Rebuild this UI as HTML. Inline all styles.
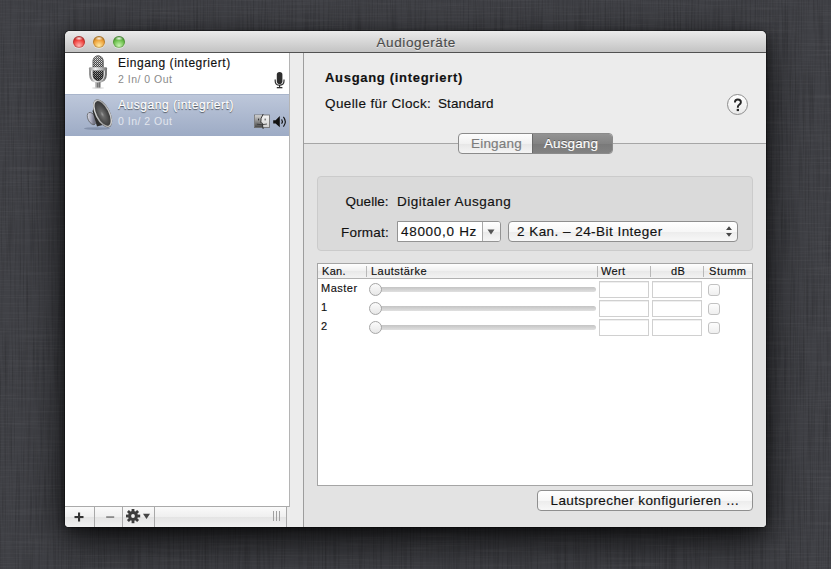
<!DOCTYPE html>
<html><head><meta charset="utf-8">
<style>
*{box-sizing:border-box;margin:0;padding:0}
html,body{width:831px;height:569px;overflow:hidden}
body{position:relative;font-family:"Liberation Sans",sans-serif;background:#404146}
.a{position:absolute;white-space:pre;line-height:1;-webkit-text-stroke:0.15px currentColor}
.b{position:absolute}
#shadow{position:absolute;left:65px;top:31px;width:701px;height:496px;border-radius:5px 5px 4px 4px;box-shadow:0 14px 40px rgba(0,0,0,.8),0 3px 12px rgba(0,0,0,.45),0 0 0 1px rgba(0,0,0,.3)}
#win{position:absolute;left:65px;top:31px;width:701px;height:496px;border-radius:5px 5px 4px 4px;background:#ececec;overflow:hidden}
#title{position:absolute;left:0;top:0;width:701px;height:22px;background:linear-gradient(#ebebeb,#d3d3d3 60%,#c3c3c3);border-bottom:1px solid #515151}
.tl{width:12px;height:12px;border-radius:50%;box-shadow:0 1px 0 rgba(255,255,255,.4),inset 0 0 0 1px rgba(0,0,0,.18)}
</style></head><body>
<svg style="position:absolute;left:0;top:0" width="831" height="569">
<filter id="lh" x="0" y="0" width="100%" height="100%"><feTurbulence type="fractalNoise" baseFrequency="0.6 0.015" numOctaves="2" seed="3"/><feColorMatrix values="0 0 0 0 0  0 0 0 0 0  0 0 0 0 0  0 0 0 -1.1 0.62"/></filter>
<filter id="lv" x="0" y="0" width="100%" height="100%"><feTurbulence type="fractalNoise" baseFrequency="0.015 0.6" numOctaves="2" seed="7"/><feColorMatrix values="0 0 0 0 1  0 0 0 0 1  0 0 0 0 1  0 0 0 -0.9 0.48"/></filter>
<rect width="831" height="569" filter="url(#lh)" opacity=".35"/>
<rect width="831" height="569" filter="url(#lv)" opacity=".12"/>
</svg>
<div id="shadow"></div>
<div id="win">
<div id="title"></div>
<div class="b tl" style="left:8px;top:5px;background:radial-gradient(ellipse 4px 2.2px at 50% 20%,rgba(255,255,255,.85),rgba(255,255,255,0)),radial-gradient(circle at 50% 80%,#ffb4b0 0,#f0423e 50%,#9a1a16 100%)"></div>
<div class="b tl" style="left:28px;top:5px;background:radial-gradient(ellipse 4px 2.2px at 50% 20%,rgba(255,255,255,.85),rgba(255,255,255,0)),radial-gradient(circle at 50% 80%,#ffe9a0 0,#eea23a 50%,#9a620c 100%)"></div>
<div class="b tl" style="left:48px;top:5px;background:radial-gradient(ellipse 4px 2.2px at 50% 20%,rgba(255,255,255,.85),rgba(255,255,255,0)),radial-gradient(circle at 50% 80%,#c8f4b0 0,#6cc04c 50%,#2f7422 100%)"></div>
<div class="a" style="left:311.50px;top:4.57px;font-size:13.5px;font-weight:400;letter-spacing:0.6px;color:#4b4b4b;text-shadow:0 1px 0 rgba(255,255,255,.55)">Audiogeräte</div>
<div class="b" style="left:0px;top:22px;width:225px;height:454px;background:#fff;border-right:1px solid #b4b4b4;border-bottom:1px solid #aaaaaa"></div>
<div class="b" style="left:0px;top:63px;width:224px;height:42px;background:linear-gradient(#bdc7da,#9dabc5);border-top:1px solid #a9b5cb"></div>
<div class="a" style="left:53.00px;top:26.04px;font-size:12px;font-weight:400;letter-spacing:0.53px;color:#111;">Eingang (integriert)</div>
<div class="a" style="left:53.00px;top:43.11px;font-size:10.5px;font-weight:400;letter-spacing:0.5px;color:#8a8a8a;-webkit-text-stroke:0">2 In/ 0 Out</div>
<div class="a" style="left:53.00px;top:67.64px;font-size:12px;font-weight:400;letter-spacing:0.53px;color:#fff;text-shadow:0 1px 1px rgba(0,0,0,.6)">Ausgang (integriert)</div>
<div class="a" style="left:53.00px;top:85.11px;font-size:10.5px;font-weight:400;letter-spacing:0.5px;color:#e2e6ee;-webkit-text-stroke:0">0 In/ 2 Out</div>
<div class="b" style="left:0px;top:476px;width:222px;height:20px;background:linear-gradient(#fafafa,#efefef 50%,#e4e4e4 51%,#f0f0f0);border-right:1px solid #a9a9a9"></div>
<div class="b" style="left:29px;top:476px;width:1px;height:20px;background:#a9a9a9"></div>
<div class="b" style="left:57px;top:476px;width:1px;height:20px;background:#a9a9a9"></div>
<div class="b" style="left:89px;top:476px;width:1px;height:20px;background:#a9a9a9"></div>
<div class="b" style="left:238px;top:22px;width:1px;height:474px;background:#9d9d9d"></div>
<div class="b" style="left:239px;top:112px;width:462px;height:384px;background:#e3e3e3;border-top:1px solid #a6a6a6"></div>
<div class="a" style="left:260.00px;top:40.30px;font-size:13px;font-weight:700;letter-spacing:0.69px;color:#111;">Ausgang (integriert)</div>
<div class="a" style="left:260.00px;top:65.67px;font-size:13.5px;font-weight:400;letter-spacing:0.38px;color:#111;">Quelle für Clock:</div>
<div class="a" style="left:373.00px;top:66.47px;font-size:13.5px;font-weight:400;letter-spacing:0.1px;color:#111;">Standard</div>
<div class="b" style="left:662px;top:63px;width:21px;height:21px;border-radius:50%;border:1px solid #8e8e8e;background:linear-gradient(#fff,#e9e9e9)"></div>
<svg class="b" style="left:667px;top:67px" width="12" height="14"><path d="M2.9 4.6 C2.9 2.4 4.3 1.5 5.8 1.5 C7.7 1.5 8.9 2.6 8.9 4.2 C8.9 5.9 7.3 6.5 6.5 7.3 C5.9 7.9 5.8 8.4 5.8 9.7" fill="none" stroke="#262626" stroke-width="1.9"/><rect x="4.7" y="10.9" width="2.3" height="2.2" fill="#262626"/></svg>
<div class="b" style="left:393px;top:102px;width:155px;height:21px;border-radius:4px;border:1px solid #8b8b8b;background:linear-gradient(#fdfdfd,#f1f1f1 50%,#e6e6e6 51%,#f4f4f4);overflow:hidden"></div>
<div class="b" style="left:467px;top:103px;width:80px;height:19px;background:linear-gradient(#939393,#838383 50%,#797979 51%,#828282);border-left:1px solid #6a6a6a;border-radius:0 3px 3px 0"></div>
<div class="a" style="left:406.00px;top:105.67px;font-size:13.5px;font-weight:400;letter-spacing:0.2px;color:#7c7c7c;">Eingang</div>
<div class="a" style="left:479.00px;top:105.67px;font-size:13.5px;font-weight:400;letter-spacing:0.1px;color:#fff;text-shadow:0 -1px 0 rgba(0,0,0,.35)">Ausgang</div>
<div class="b" style="left:252px;top:145px;width:436px;height:75px;border-radius:4px;border:1px solid #cbcbcb;background:#dadada"></div>
<div class="a" style="left:280.50px;top:163.57px;font-size:13.5px;font-weight:400;letter-spacing:0.04px;color:#111;">Quelle:</div>
<div class="a" style="left:332.00px;top:163.57px;font-size:13.5px;font-weight:400;letter-spacing:0.5px;color:#111;">Digitaler Ausgang</div>
<div class="a" style="left:276.00px;top:194.57px;font-size:13.5px;font-weight:400;letter-spacing:0.2px;color:#111;">Format:</div>
<div class="b" style="left:332px;top:190px;width:104px;height:21px;border:1px solid #939393;border-radius:0 3px 3px 0;background:#fff"></div>
<div class="b" style="left:417px;top:191px;width:18px;height:19px;border-left:1px solid #a8a8a8;background:linear-gradient(#fff,#f3f3f3 50%,#e9e9e9 51%,#f5f5f5);border-radius:0 2px 2px 0"></div>
<div class="a" style="left:336.00px;top:194.17px;font-size:13.5px;font-weight:400;letter-spacing:0.7px;color:#111;">48000,0 Hz</div>
<svg class="b" style="left:421px;top:197px" width="10" height="8"><path d="M1.5 1.5 L8.5 1.5 L5 6.5 Z" fill="#555"/></svg>
<div class="b" style="left:443px;top:190px;width:230px;height:21px;border:1px solid #8f8f8f;border-radius:4px;background:linear-gradient(#fff,#f7f7f7 50%,#ececec 51%,#f7f7f7)"></div>
<div class="a" style="left:452.00px;top:193.57px;font-size:13.5px;font-weight:400;letter-spacing:0.46px;color:#111;">2 Kan. – 24-Bit Integer</div>
<svg class="b" style="left:659px;top:194px" width="10" height="14"><path d="M5 1.2 L8 5 L2 5 Z M2 8 L8 8 L5 11.8 Z" fill="#484848"/></svg>
<div class="b" style="left:252px;top:232px;width:436px;height:223px;border:1px solid #a5a5a5;background:#fff"></div>
<div class="b" style="left:253px;top:233px;width:434px;height:15px;background:linear-gradient(#fefefe,#f0f0f0 50%,#e8e8e8 51%,#f3f3f3);border-bottom:1px solid #b1b1b1"></div>
<div class="b" style="left:301px;top:235px;width:1px;height:11px;background:#b8b8b8"></div>
<div class="b" style="left:532px;top:235px;width:1px;height:11px;background:#b8b8b8"></div>
<div class="b" style="left:585px;top:235px;width:1px;height:11px;background:#b8b8b8"></div>
<div class="b" style="left:638px;top:235px;width:1px;height:11px;background:#b8b8b8"></div>
<div class="a" style="left:257.00px;top:234.69px;font-size:11px;font-weight:400;letter-spacing:0.3px;color:#111;">Kan.</div>
<div class="a" style="left:306.00px;top:234.69px;font-size:11px;font-weight:400;letter-spacing:0.47px;color:#111;">Lautstärke</div>
<div class="a" style="left:536.00px;top:234.69px;font-size:11px;font-weight:400;letter-spacing:0.32px;color:#111;">Wert</div>
<div class="a" style="left:606.00px;top:234.69px;font-size:11px;font-weight:400;letter-spacing:0.3px;color:#111;">dB</div>
<div class="a" style="left:644.00px;top:234.69px;font-size:11px;font-weight:400;letter-spacing:0.55px;color:#111;">Stumm</div>
<div class="a" style="left:256.00px;top:251.79px;font-size:11px;font-weight:400;letter-spacing:0.5px;color:#111;">Master</div>
<div class="b" style="left:307px;top:256px;width:224px;height:5px;border-radius:3px;background:linear-gradient(#c4c4c4,#e0e0e0);"></div>
<div class="b" style="left:304px;top:252px;width:13px;height:13px;border-radius:50%;border:1px solid #a6a6a6;background:linear-gradient(#fbfbfb,#e7e7e7)"></div>
<div class="b" style="left:534px;top:250px;width:50px;height:17px;border:1px solid #d0d0d0;box-shadow:inset 0 1px 0 #efefef;background:#fff"></div>
<div class="b" style="left:587px;top:250px;width:50px;height:17px;border:1px solid #d0d0d0;box-shadow:inset 0 1px 0 #efefef;background:#fff"></div>
<div class="b" style="left:643px;top:253px;width:12px;height:12px;border:1px solid #c2c2c2;border-radius:3px;background:linear-gradient(#fdfdfd,#efefef)"></div>
<div class="a" style="left:256.00px;top:271.19px;font-size:11px;font-weight:400;letter-spacing:0.5px;color:#111;">1</div>
<div class="b" style="left:307px;top:275px;width:224px;height:5px;border-radius:3px;background:linear-gradient(#c4c4c4,#e0e0e0);"></div>
<div class="b" style="left:304px;top:271px;width:13px;height:13px;border-radius:50%;border:1px solid #a6a6a6;background:linear-gradient(#fbfbfb,#e7e7e7)"></div>
<div class="b" style="left:534px;top:269px;width:50px;height:17px;border:1px solid #d0d0d0;box-shadow:inset 0 1px 0 #efefef;background:#fff"></div>
<div class="b" style="left:587px;top:269px;width:50px;height:17px;border:1px solid #d0d0d0;box-shadow:inset 0 1px 0 #efefef;background:#fff"></div>
<div class="b" style="left:643px;top:272px;width:12px;height:12px;border:1px solid #c2c2c2;border-radius:3px;background:linear-gradient(#fdfdfd,#efefef)"></div>
<div class="a" style="left:256.00px;top:290.19px;font-size:11px;font-weight:400;letter-spacing:0.5px;color:#111;">2</div>
<div class="b" style="left:307px;top:294px;width:224px;height:5px;border-radius:3px;background:linear-gradient(#c4c4c4,#e0e0e0);"></div>
<div class="b" style="left:304px;top:290px;width:13px;height:13px;border-radius:50%;border:1px solid #a6a6a6;background:linear-gradient(#fbfbfb,#e7e7e7)"></div>
<div class="b" style="left:534px;top:288px;width:50px;height:17px;border:1px solid #d0d0d0;box-shadow:inset 0 1px 0 #efefef;background:#fff"></div>
<div class="b" style="left:587px;top:288px;width:50px;height:17px;border:1px solid #d0d0d0;box-shadow:inset 0 1px 0 #efefef;background:#fff"></div>
<div class="b" style="left:643px;top:291px;width:12px;height:12px;border:1px solid #c2c2c2;border-radius:3px;background:linear-gradient(#fdfdfd,#efefef)"></div>
<div class="b" style="left:472px;top:459px;width:216px;height:21px;border:1px solid #8f8f8f;border-radius:4px;background:linear-gradient(#fff,#f7f7f7 50%,#ececec 51%,#f7f7f7)"></div>
<div class="a" style="left:485.50px;top:462.87px;font-size:13.5px;font-weight:400;letter-spacing:0.4px;color:#111;">Lautsprecher konfigurieren …</div>
<svg class="b" style="left:20px;top:22px" width="26" height="38" viewBox="0 0 26 38"><defs><pattern id="chk" width="2" height="2" patternUnits="userSpaceOnUse"><rect width="2" height="2" fill="#2a2a2a"/><rect width="1" height="1" fill="#d8d8d8"/><rect x="1" y="1" width="1" height="1" fill="#9a9a9a"/></pattern><linearGradient id="slv" x1="0" x2="1"><stop offset="0" stop-color="#8a8a8a"/><stop offset=".35" stop-color="#f2f2f2"/><stop offset=".7" stop-color="#b5b5b5"/><stop offset="1" stop-color="#6d6d6d"/></linearGradient><linearGradient id="capd" x1="0" y1="0" x2="0" y2="1"><stop offset="0" stop-color="#fff" stop-opacity=".25"/><stop offset=".45" stop-color="#fff" stop-opacity=".1"/><stop offset=".55" stop-color="#000" stop-opacity=".2"/><stop offset="1" stop-color="#000" stop-opacity=".45"/></linearGradient></defs><path d="M5.2 15.5 V21.5 Q5.2 28.8 13 28.8 Q20.8 28.8 20.8 21.5 V15.5" fill="none" stroke="url(#slv)" stroke-width="2.2"/><rect x="8" y="2.8" width="10.2" height="24.8" rx="5.1" fill="url(#chk)" stroke="#3a3a3a" stroke-width=".8"/><rect x="8" y="2.8" width="10.2" height="24.8" rx="5.1" fill="url(#capd)"/><rect x="4" y="14.2" width="18" height="3.4" rx="1" fill="url(#slv)"/><rect x="10.5" y="29" width="5" height="5.5" fill="url(#slv)"/><rect x="11.8" y="29.5" width=".9" height="5" fill="#444"/><rect x="13.6" y="29.5" width=".9" height="5" fill="#444"/><ellipse cx="13" cy="35" rx="6" ry="1" fill="#000" opacity=".12"/></svg>
<svg class="b" style="left:15px;top:65px" width="36" height="36" viewBox="0 0 36 36"><defs><radialGradient id="cone" cx=".45" cy=".52" r=".6"><stop offset="0" stop-color="#9c9c9c"/><stop offset=".18" stop-color="#6a6a6a"/><stop offset=".6" stop-color="#474747"/><stop offset="1" stop-color="#2c2c2c"/></radialGradient><linearGradient id="mag" x1="0" y1="0" x2="1" y2="1"><stop offset="0" stop-color="#f4f5fa"/><stop offset=".45" stop-color="#a9abbd"/><stop offset=".7" stop-color="#6e7080"/><stop offset="1" stop-color="#c9cbd8"/></linearGradient><linearGradient id="rim" x1="0" y1="0" x2="1" y2="1"><stop offset="0" stop-color="#f0f0f0"/><stop offset=".5" stop-color="#9a9a9a"/><stop offset="1" stop-color="#e0e0e0"/></linearGradient></defs><ellipse cx="17" cy="32.6" rx="13" ry="1.4" fill="#3a4866" opacity=".3"/><ellipse cx="11.8" cy="22.5" rx="3.8" ry="6.6" transform="rotate(-27 11.8 22.5)" fill="url(#mag)" stroke="#4a4a4a" stroke-width=".6"/><path d="M12.5 15 L17 6 L30 27 L17 30.5 Z" fill="#2e2e2e"/><ellipse cx="22.6" cy="17.4" rx="7.4" ry="15.2" transform="rotate(-27 22.6 17.4)" fill="#3a3a3a"/><ellipse cx="22.6" cy="17.4" rx="6.6" ry="14.2" transform="rotate(-27 22.6 17.4)" fill="url(#cone)" stroke="url(#rim)" stroke-width="1.5"/></svg>
<svg class="b" style="left:208px;top:40px" width="13" height="18" viewBox="0 0 13 18"><rect x="3.8" y="1" width="5.6" height="12" rx="2.8" fill="#2e2e2e"/><path d="M2.2 8.5 V10 Q2.2 14.2 6.6 14.2 Q11 14.2 11 10 V8.5" fill="none" stroke="#2e2e2e" stroke-width="1.2"/><rect x="6" y="14" width="1.2" height="3" fill="#2e2e2e"/><rect x="3.8" y="16" width="5.6" height="1.3" fill="#2e2e2e"/></svg>
<svg class="b" style="left:189px;top:83px" width="16" height="15" viewBox="0 0 16 15"><defs><linearGradient id="fl" x1="0" y1="0" x2="0" y2="1"><stop offset="0" stop-color="#d0d0d0"/><stop offset="1" stop-color="#4a4a4a"/></linearGradient><linearGradient id="fr" x1="0" y1="0" x2="0" y2="1"><stop offset="0" stop-color="#f6f6f6"/><stop offset="1" stop-color="#cfcfcf"/></linearGradient></defs><rect x=".5" y="1" width="15" height="12.6" fill="url(#fr)" stroke="#6a6a6a" stroke-width=".8"/><path d="M.9 1.4 H9 Q6 5 7 8.5 Q9 9.5 9 13.2 H.9 Z" fill="url(#fl)"/><path d="M9.2 0 Q6.2 4.5 6.8 8.5 L8.6 9.4 Q8.4 12 9.2 15" fill="none" stroke="#2a2a2a" stroke-width=".9"/><rect x="4" y="4.6" width="1.1" height="1.8" fill="#333"/><rect x="10.6" y="4.6" width="1.1" height="1.8" fill="#555"/><path d="M2.8 10.2 Q8 11.4 13 10" fill="none" stroke="#333" stroke-width=".8"/></svg>
<svg class="b" style="left:207px;top:84px" width="16" height="13" viewBox="0 0 16 13"><path d="M1.2 5.2 H3.6 L7.8 1 V12.2 L3.6 8.6 H1.2 Z" fill="#111"/><path d="M9.6 4.4 Q11.2 6.6 9.6 8.8" fill="none" stroke="#111" stroke-width="1.1"/><path d="M11.4 1.8 Q15.2 6.6 11.4 11.6" fill="none" stroke="#111" stroke-width="1.1"/></svg>
<svg class="b" style="left:8px;top:480px" width="12" height="12" viewBox="0 0 12 12"><rect x="1.5" y="5" width="9" height="2.1" fill="#333"/><rect x="5" y="1.5" width="2.1" height="9" fill="#333"/></svg>
<svg class="b" style="left:40px;top:480px" width="12" height="12" viewBox="0 0 12 12"><rect x="1.2" y="5.2" width="8" height="1.8" fill="#8a8a8a"/></svg>
<svg class="b" style="left:61px;top:478px" width="15" height="15" viewBox="0 0 15 15"><rect x="11.30" y="5.50" width="2.8" height="3" transform="rotate(90 12.70 7.00)" fill="#3c3c3c"/><rect x="9.63" y="9.53" width="2.8" height="3" transform="rotate(135 11.03 11.03)" fill="#3c3c3c"/><rect x="5.60" y="11.20" width="2.8" height="3" transform="rotate(180 7.00 12.70)" fill="#3c3c3c"/><rect x="1.57" y="9.53" width="2.8" height="3" transform="rotate(225 2.97 11.03)" fill="#3c3c3c"/><rect x="-0.10" y="5.50" width="2.8" height="3" transform="rotate(270 1.30 7.00)" fill="#3c3c3c"/><rect x="1.57" y="1.47" width="2.8" height="3" transform="rotate(315 2.97 2.97)" fill="#3c3c3c"/><rect x="5.60" y="-0.20" width="2.8" height="3" transform="rotate(360 7.00 1.30)" fill="#3c3c3c"/><rect x="9.63" y="1.47" width="2.8" height="3" transform="rotate(405 11.03 2.97)" fill="#3c3c3c"/><circle cx="7" cy="7" r="4.9" fill="#3c3c3c"/><circle cx="7" cy="7" r="1.9" fill="#f0f0f0"/></svg>
<svg class="b" style="left:77px;top:481px" width="9" height="8" viewBox="0 0 9 8"><path d="M1 1.8 H8 L4.5 7 Z" fill="#444"/></svg>
<svg class="b" style="left:206px;top:479px" width="12" height="13" viewBox="0 0 12 13"><rect x="2" y="1" width="1" height="10" fill="#a0a0a0"/><rect x="5" y="1" width="1" height="10" fill="#a0a0a0"/><rect x="8" y="1" width="1" height="10" fill="#a0a0a0"/></svg>

</div>
</body></html>
